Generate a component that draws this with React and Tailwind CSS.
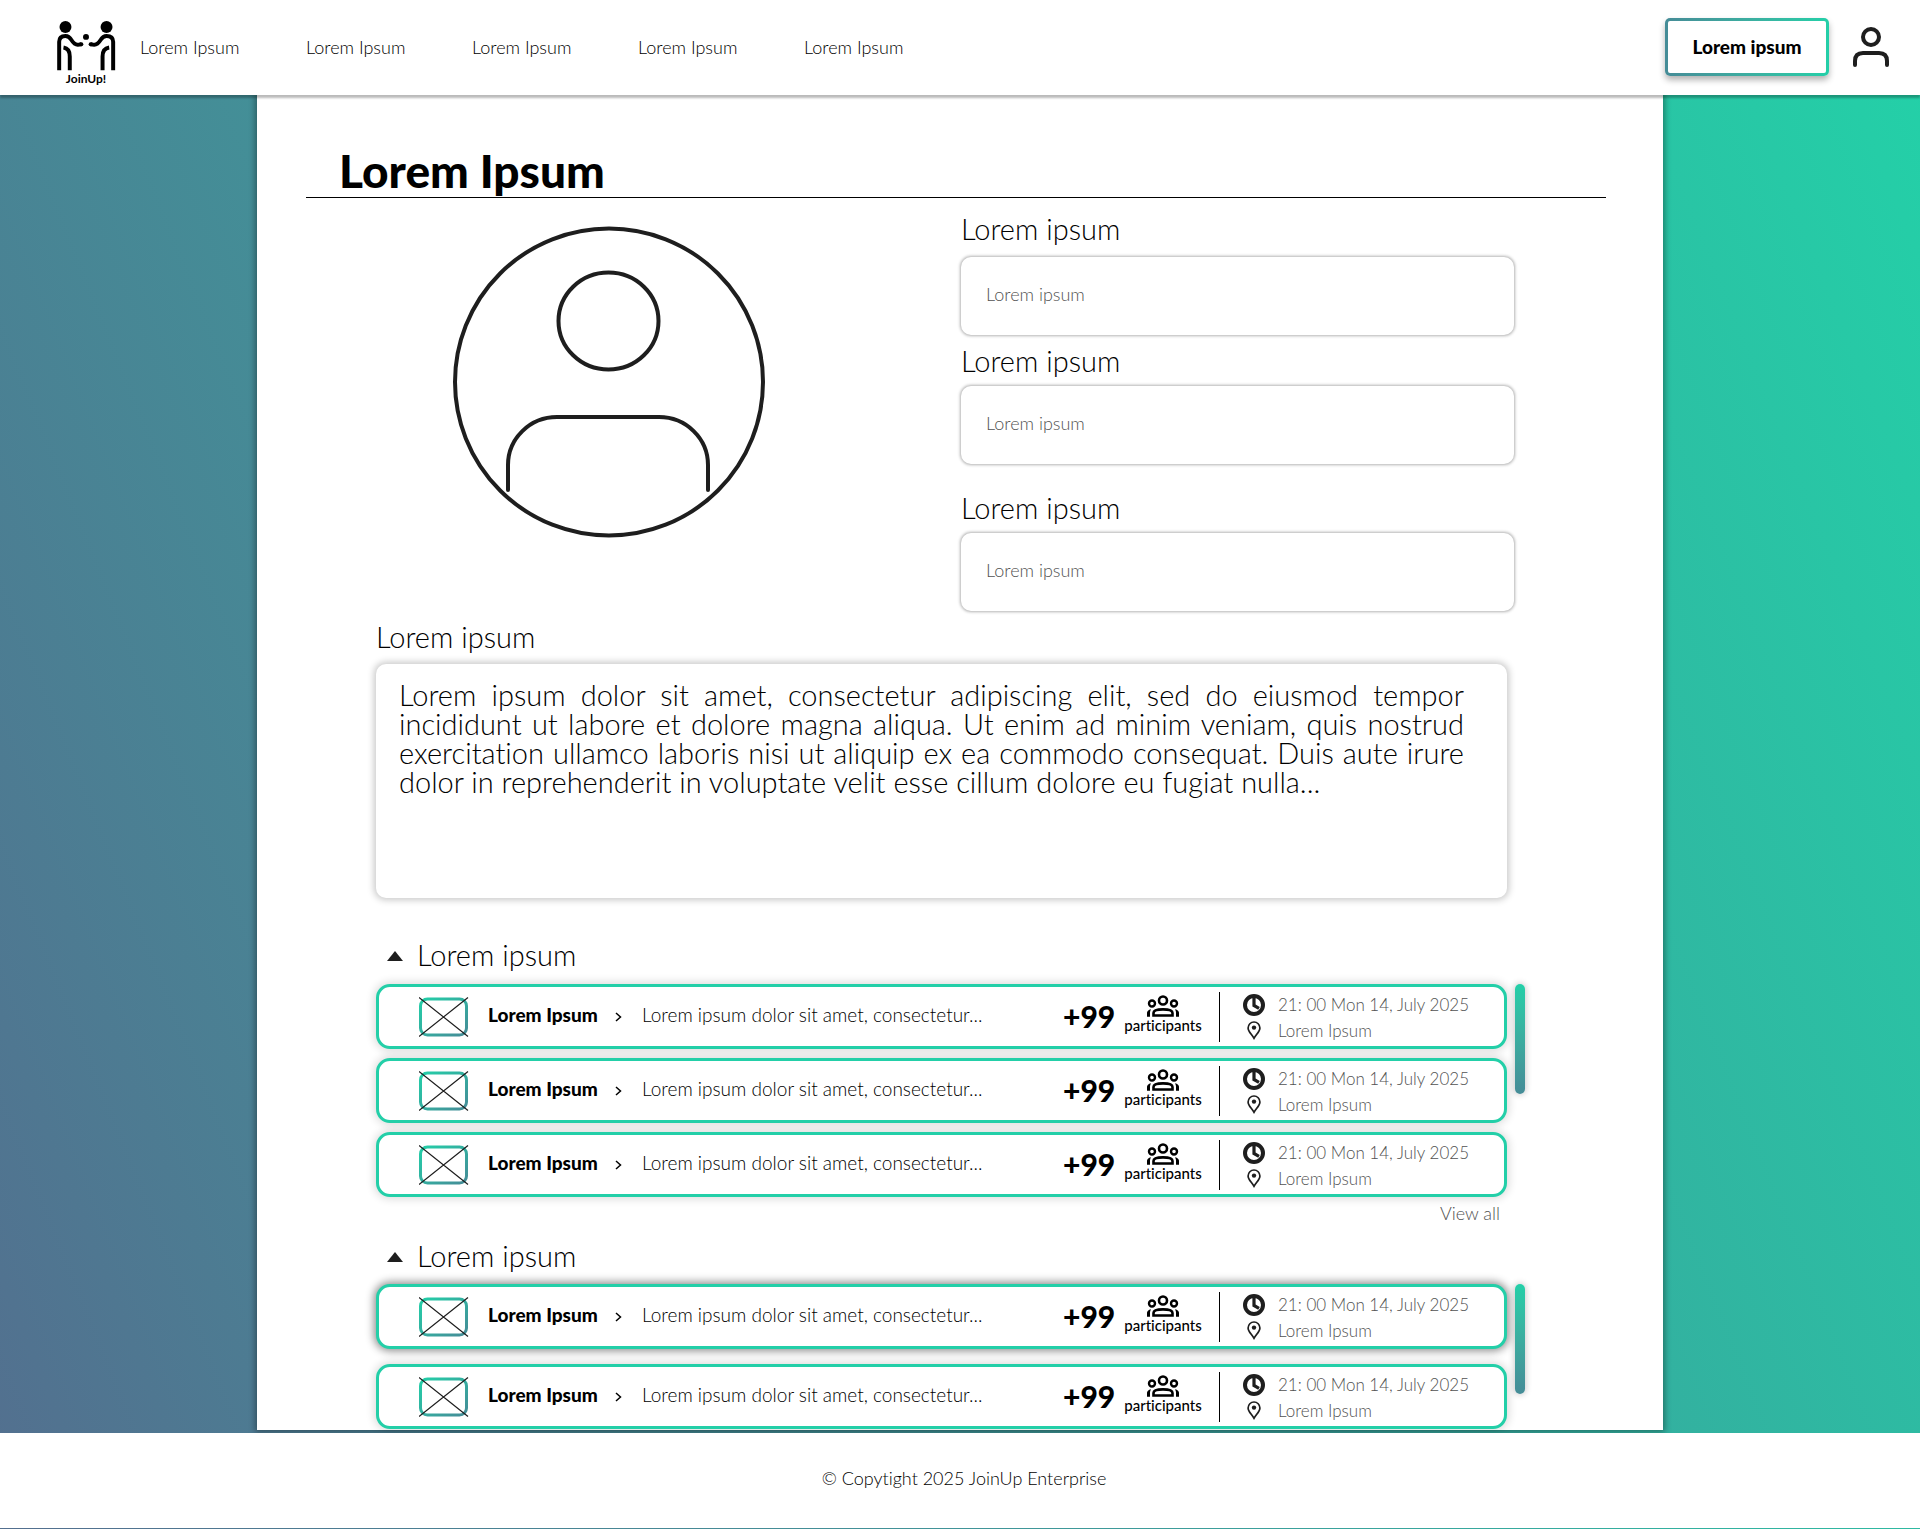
import { useState } from "react";

const NAV_ITEMS = ["home", "explore", "events", "groups", "about"];

const FIELDS = [
  { id: "name", label: "mb-[10px]", wrap: "" },
  { id: "email", label: "mb-[7px]", wrap: "mt-2" },
  { id: "city", label: "mb-[7px]", wrap: "mt-[26px]" },
];

const ABOUT =
  "Lorem ipsum dolor sit amet, consectetur adipiscing elit, sed do eiusmod tempor incididunt ut labore et dolore magna aliqua. Ut enim ad minim veniam, quis nostrud exercitation ullamco laboris nisi ut aliquip ex ea commodo consequat. Duis aute irure dolor in reprehenderit in voluptate velit esse cillum dolore eu fugiat nulla...";

function Logo() {
  return (
    <a href="#home" aria-label="JoinUp!" className="flex w-[60px] flex-col items-center">
      <svg viewBox="168 60 178 154" className="h-[51px] w-[60px]" fill="none" stroke="#000" strokeWidth="12">
        <g>
          <circle cx="195" cy="81" r="18" fill="#000" stroke="none" />
          <path d="M176 212V126Q176 108 195 108Q206 108 212 119Q222 135 232 135L243 133" />
          <path d="M208 212V170Q208 146 189 143" />
          <path d="M242 133h1" strokeLinecap="round" />
        </g>
        <g>
          <circle cx="319" cy="81" r="18" fill="#000" stroke="none" />
          <path d="M339 212V126Q339 108 319 108Q308 108 302 119Q292 135 282 135L271 133" />
          <path d="M307 212V170Q307 146 327 143" />
          <path d="M271 133h1" strokeLinecap="round" />
        </g>
        <circle cx="257" cy="111" r="9" fill="#000" stroke="none" />
      </svg>
      <span className="text-[12px] leading-[15px] font-bold">JoinUp!</span>
    </a>
  );
}

function UserIcon() {
  return (
    <svg viewBox="0 0 36 40" className="h-10 w-9" fill="none" stroke="#1e1e1e" strokeWidth="4" strokeLinecap="round">
      <circle cx="18" cy="10" r="8" />
      <path d="M2 38v-4q0-8 8-8h16q8 0 8 8v4" />
    </svg>
  );
}

function Avatar() {
  return (
    <svg viewBox="0 0 312 312" className="h-[312px] w-[312px]" fill="none" stroke="#1e1e1e" strokeWidth="4" strokeLinecap="round">
      <ellipse cx="156" cy="156" rx="154" ry="153.500" />
      <ellipse cx="155.500" cy="95" rx="50" ry="48.500" />
      <path d="M55 264v-25a49 48 0 0 1 49-48h102a49 48 0 0 1 49 48v25" />
    </svg>
  );
}

function ImagePlaceholder() {
  return (
    <svg viewBox="0 0 50 40" className="h-10 w-[50px] shrink-0" fill="none">
      <defs>
        <linearGradient id="thumb" x1="0" y1="0" x2="1" y2="1">
          <stop offset="0" stopColor="#23cfa8" />
          <stop offset="1" stopColor="#458c97" />
        </linearGradient>
      </defs>
      <rect x="1.500" y="2" width="46" height="36" rx="7" stroke="url(#thumb)" strokeWidth="3" />
      <path d="M0 0.500L49 39.500M49 0.500L0 39.500" stroke="#1e1e1e" strokeWidth="1.200" />
    </svg>
  );
}

function Chevron() {
  return (
    <svg viewBox="0 0 8 12" className="h-3 w-2 shrink-0" fill="none" stroke="#000" strokeWidth="1.500">
      <path d="M1 2L5.500 6L1 10" />
    </svg>
  );
}

function PeopleIcon() {
  return (
    <svg viewBox="0 0 32 22" className="h-[22px] w-8" fill="none" stroke="#000">
      <circle cx="16" cy="5.500" r="4" strokeWidth="2.600" />
      <circle cx="5" cy="8.500" r="3" strokeWidth="2.400" />
      <circle cx="27" cy="8.500" r="3" strokeWidth="2.400" />
      <path d="M6.500 20.500v-2.500q0-3.600 9.500-3.600t9.500 3.600v2.500z" strokeWidth="2.600" />
      <path d="M0 21.800v-4q0-2.600 4-3.600q-1 1.600-1 3.400v4.200zM32 21.800v-4q0-2.600-4-3.600q1 1.600 1 3.400v4.200z" fill="#000" stroke="none" />
    </svg>
  );
}

function ClockIcon() {
  return (
    <svg viewBox="0 0 22 22" className="h-[22px] w-[22px]" fill="none" stroke="#1e1e1e">
      <circle cx="11" cy="11" r="9" strokeWidth="4" />
      <path d="M11 3v8.500l5 2.800" strokeWidth="3.200" />
    </svg>
  );
}

function PinIcon() {
  return (
    <svg viewBox="0 0 14 19" className="h-[19px] w-[14px]" fill="none" stroke="#1e1e1e">
      <path d="M7 17.300C4.500 13 1.100 10.500 1.100 6.900a5.900 5.900 0 0 1 11.800 0C12.900 10.500 9.500 13 7 17.300z" strokeWidth="1.700" />
      <circle cx="7" cy="6.600" r="2.200" fill="#1e1e1e" stroke="none" />
    </svg>
  );
}

function EventCard({ strong }) {
  return (
    <li
      className={
        "flex h-[65px] items-center rounded-[14px] border-[3px] border-[#23cfa8] bg-white pl-10 " +
        (strong ? "shadow-[0_0_9px_2px_rgba(0,0,0,0.45)]" : "shadow-[0_0_9px_2px_rgba(0,0,0,0.14)]")
      }
    >
      <ImagePlaceholder />
      <a href="#event" className="ml-[19px] w-[127px] pb-1 text-[19px] leading-6 font-black">
        Lorem Ipsum
      </a>
      <Chevron />
      <p className="ml-[19px] flex-1 truncate pb-1 text-[19px] leading-6 font-light">
        Lorem ipsum dolor sit amet, consectetur...
      </p>
      <p className="w-[61px] pb-0.5 text-[30px] leading-8 font-black">+99</p>
      <div className="flex w-[78px] flex-col items-center pb-1.5">
        <PeopleIcon />
        <span className="text-[15px] leading-4 font-medium">participants</span>
      </div>
      <div className="ml-[17px] h-[50px] w-px bg-black" />
      <div className="ml-[23px] flex w-[261px] flex-col pt-0.5 text-[18px] leading-[26px] font-light text-neutral-600">
        <p className="flex items-center">
          <span className="flex w-[22px] justify-center">
            <ClockIcon />
          </span>
          <span className="ml-[13px] text-[17px]">21: 00 Mon 14, July 2025</span>
        </p>
        <p className="flex items-center">
          <span className="flex w-[22px] justify-center">
            <PinIcon />
          </span>
          <span className="ml-[13px] text-[17px]">Lorem Ipsum</span>
        </p>
      </div>
    </li>
  );
}

function EventSection({ id, count, gap, headGap, highlight }) {
  const [open, setOpen] = useState(true);
  return (
    <section className="pr-[138px] pl-[119px]">
      <h2 className={"text-[29px] leading-9 font-light " + headGap}>
        <button
          type="button"
          aria-expanded={open}
          aria-controls={id}
          onClick={() => setOpen(!open)}
          className="flex items-center pl-[11px]"
        >
          <svg viewBox="0 0 16 12" className="h-3 w-4" fill="#1e1e1e">
            <path d="M8 2L16 12H0z" />
          </svg>
          <span className="ml-[14px]">Lorem ipsum</span>
        </button>
      </h2>
      {open && (
        <div id={id} className="flex gap-2">
          <ul className={"flex flex-1 flex-col " + gap}>
            {Array.from({ length: count }, (_, i) => (
              <EventCard key={i} strong={highlight === i} />
            ))}
          </ul>
          <div className="h-[110px] w-[10px] rounded-full bg-linear-to-b from-[#23cfa8] to-[#458c97] shadow-[0_0_6px_1px_rgba(0,0,0,0.2)]" />
        </div>
      )}
    </section>
  );
}

export default function App() {
  return (
    <div className="flex min-h-screen flex-col bg-[linear-gradient(68deg,#536f8f,#23d1a8)] font-['Lato','Liberation_Sans',sans-serif] text-black [font-variant-ligatures:none]">
      <header className="relative z-10 flex h-[95px] items-center bg-white pr-[31px] pb-0.5 pl-14 shadow-[0_3px_2px_rgba(0,0,0,0.27)]">
        <div className="pt-[13px]">
          <Logo />
        </div>
        <nav className="ml-6 flex">
          {NAV_ITEMS.map((item) => (
            <a key={item} href={"#" + item} className="w-[166px] text-[18px] leading-6 font-light">
              Lorem Ipsum
            </a>
          ))}
        </nav>
        <button
          type="button"
          className="ml-auto h-[58px] w-[164px] rounded-[5px] bg-linear-to-r from-[#458c97] to-[#23cfa8] p-[3px] shadow-[0_4px_6px_rgba(0,0,0,0.3)]"
        >
          <span className="flex h-full items-center justify-center rounded-[2px] bg-white text-[19px] leading-6 font-black">
            Lorem ipsum
          </span>
        </button>
        <button type="button" aria-label="Account" className="ml-6">
          <UserIcon />
        </button>
      </header>

      <main className="mx-auto w-full max-w-[1406px] bg-white pb-px shadow-[0_0_6px_2px_rgba(0,0,0,0.35)]">
        <h1 className="mr-[57px] ml-[49px] border-b border-black pt-[50px] pl-[33px] text-[46px] leading-[52px] font-black">
          Lorem Ipsum
        </h1>

        <div className="grid grid-cols-2">
          <div className="flex justify-center pt-7">
            <Avatar />
          </div>
          <div className="pt-[13px] pr-[149px] pl-px">
            {FIELDS.map((f) => (
              <div key={f.id} className={f.wrap}>
                <label htmlFor={f.id} className={"block text-[29px] leading-9 font-light " + f.label}>
                  Lorem ipsum
                </label>
                <input
                  id={f.id}
                  type="text"
                  placeholder="Lorem ipsum"
                  className="block h-[78px] w-full rounded-[10px] bg-white px-[25px] pb-1 text-[18px] font-light shadow-[0_0_3px_1px_rgba(0,0,0,0.3)] outline-none placeholder:text-neutral-600"
                />
              </div>
            ))}
          </div>
        </div>

        <div className="mt-2 pr-[156px] pl-[119px]">
          <label htmlFor="about" className="mb-[9px] block text-[29px] leading-9 font-light">
            Lorem ipsum
          </label>
          <textarea
            id="about"
            defaultValue={ABOUT}
            className="block h-[234px] w-full resize-none rounded-[10px] bg-white pt-4 pr-[43px] pl-[23px] text-justify text-[29px] leading-[29px] font-light shadow-[0_0_7px_2px_rgba(0,0,0,0.22)] outline-none"
          />
        </div>

        <div className="mt-[39px]">
          <EventSection id="upcoming" count={3} gap="gap-[9px]" headGap="mb-[11px]" />
        </div>
        <div className="mt-1 flex justify-end pr-[163px]">
          <a href="#all" className="text-[18px] leading-6 font-light text-neutral-600">
            View all
          </a>
        </div>
        <div className="mt-[13px]">
          <EventSection id="past" count={2} gap="gap-[15px]" headGap="mb-[10px]" highlight={0} />
        </div>
      </main>

      <footer className="mt-[3px] mb-px flex h-[95px] items-center justify-center bg-white pb-1.5 pl-2 text-[18px] leading-6 font-light">
        © Copytight 2025 JoinUp Enterprise
      </footer>
    </div>
  );
}
